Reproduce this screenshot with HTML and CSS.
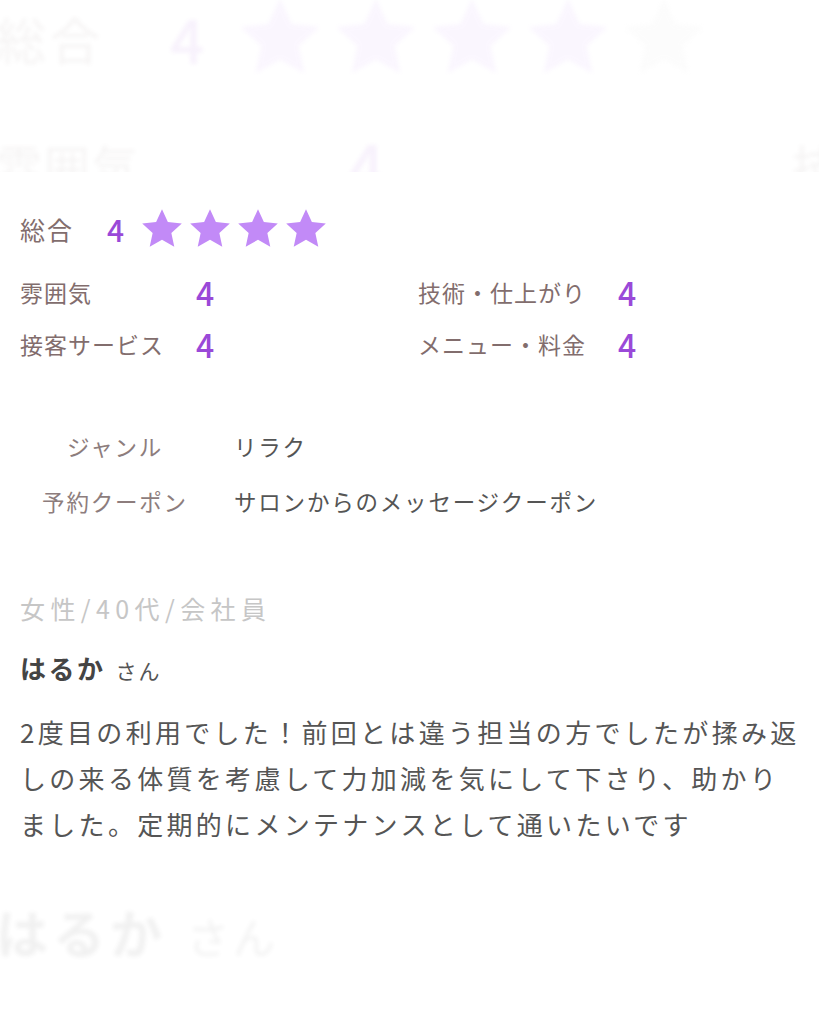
FILE: index.html
```html
<!DOCTYPE html>
<html lang="ja">
<head>
  <meta charset="UTF-8" />
  <meta name="viewport" content="width=device-width, initial-scale=1.0"/>
  <title>口コミ</title>
  <link rel="stylesheet" href="styles.css">
</head>
<body>

  <svg width="0" height="0" class="defs" aria-hidden="true">
    <symbol id="star" viewBox="0 0 24 24">
      <path d="M12 1.2l3.2 7 7.6.8-5.7 5.2 1.6 7.5L12 17.9l-6.7 3.8 1.6-7.5L1.2 9l7.6-.8z"/>
    </symbol>
  </svg>

  <div class="page">

    <main class="sheet">
      <section class="rating">
        <div class="rating-total">
          <span class="total-label">総合</span>
          <span class="total-num">4</span>
          <span class="stars">
            <svg class="star on"><use href="#star"/></svg>
            <svg class="star on"><use href="#star"/></svg>
            <svg class="star on"><use href="#star"/></svg>
            <svg class="star on"><use href="#star"/></svg>
            <svg class="star off"><use href="#star"/></svg>
          </span>
        </div>
        <div class="rating-grid">
          <span class="rating-label">雰囲気</span><span class="rating-num">4</span>
          <span class="rating-label">技術・仕上がり</span><span class="rating-num">4</span>
          <span class="rating-label">接客サービス</span><span class="rating-num">4</span>
          <span class="rating-label">メニュー・料金</span><span class="rating-num">4</span>
        </div>
      </section>

      <dl class="info">
        <dt>ジャンル</dt><dd>リラク</dd>
        <dt>予約クーポン</dt><dd>サロンからのメッセージクーポン</dd>
      </dl>

      <section class="review">
        <p class="reviewer-attr">女性/40代/会社員</p>
        <p class="reviewer-name"><b>はるか</b><span>さん</span></p>
        <p class="review-body">2度目の利用でした！前回とは違う担当の方でしたが揉み返しの来る体質を考慮して力加減を気にして下さり、助かりました。定期的にメンテナンスとして通いたいです</p>
      </section>
    </main>

    <!-- faint magnified echo at the top -->
    <div class="ghost ghost-top" aria-hidden="true">
      <div class="ghost-inner">
        <div class="sheet">
          <section class="rating">
            <div class="rating-total">
              <span class="total-label">総合</span>
              <span class="total-num">4</span>
              <span class="stars">
                <svg class="star on"><use href="#star"/></svg>
                <svg class="star on"><use href="#star"/></svg>
                <svg class="star on"><use href="#star"/></svg>
                <svg class="star on"><use href="#star"/></svg>
                <svg class="star dim"><use href="#star"/></svg>
              </span>
            </div>
            <div class="rating-grid">
              <span class="rating-label">雰囲気</span><span class="rating-num">4</span>
              <span class="rating-label">技術・仕上がり</span><span class="rating-num">4</span>
              <span class="rating-label">接客サービス</span><span class="rating-num">4</span>
              <span class="rating-label">メニュー・料金</span><span class="rating-num">4</span>
            </div>
          </section>
        </div>
      </div>
    </div>

    <!-- faint magnified echo at the bottom -->
    <div class="ghost ghost-bottom" aria-hidden="true">
      <div class="ghost-inner">
        <div class="sheet">
          <section class="rating">
            <div class="rating-total">
              <span class="total-label">総合</span>
              <span class="total-num">4</span>
            </div>
            <div class="rating-grid">
              <span class="rating-label">雰囲気</span><span class="rating-num">4</span>
              <span class="rating-label">技術・仕上がり</span><span class="rating-num">4</span>
              <span class="rating-label">接客サービス</span><span class="rating-num">4</span>
              <span class="rating-label">メニュー・料金</span><span class="rating-num">4</span>
            </div>
          </section>
          <dl class="info">
            <dt>ジャンル</dt><dd>リラク</dd>
            <dt>予約クーポン</dt><dd>サロンからのメッセージクーポン</dd>
          </dl>
          <section class="review">
            <p class="reviewer-attr">女性/40代/会社員</p>
            <p class="reviewer-name"><b>はるか</b><span>さん</span></p>
            <p class="review-body">2度目の利用でした！前回とは違う担当の方でしたが揉み返しの来る体質を考慮して力加減を気にして下さり、助かりました。定期的にメンテナンスとして通いたいです</p>
          </section>
        </div>
      </div>
    </div>

  </div>

</body>
</html>
```

FILE: styles.css
```css
body {
  font-family: 'Noto Sans CJK JP', 'Noto Sans', sans-serif;
  margin: 0;
  padding: 0;
  background-color: #ffffff;
  color: #555;
}

.defs {
  position: absolute;
}

.page {
  position: relative;
  width: 819px;
  height: 1024px;
  overflow: hidden;
}

.sheet {
  padding: 209px 12px 0 20px;
}

/* ---- ratings ---- */

.rating-total {
  display: flex;
  align-items: center;
  height: 40px;
}

.total-label {
  width: 87px;
  font-size: 25px;
  letter-spacing: 2px;
  color: #826d6d;
}

.total-num {
  width: 33px;
  font-size: 30px;
  font-weight: 500;
  color: #9a49d8;
}

.stars {
  display: flex;
  gap: 4px;
}

.star {
  width: 44px;
  height: 44px;
}

.star.on {
  fill: #c28af7;
}

.star.off {
  fill: #ffffff;
}

.star.dim {
  fill: #d8d8d8;
}

.rating-grid {
  display: grid;
  grid-template-columns: 176px 222px 200px auto;
  grid-auto-rows: 52px;
  align-items: center;
  margin-top: 17px;
}

.rating-label {
  font-size: 23px;
  letter-spacing: 1px;
  color: #826d6d;
}

.rating-num {
  font-size: 32px;
  font-weight: 500;
  color: #9a49d8;
}

/* ---- info ---- */

.info {
  display: grid;
  grid-template-columns: 190px auto;
  grid-auto-rows: 55px;
  column-gap: 24px;
  align-items: center;
  margin: 48px 0 0;
  font-size: 22.5px;
  letter-spacing: 1.8px;
}

.info dt {
  text-align: center;
  color: #8d7d7d;
}

.info dd {
  margin: 0;
  color: #555;
}

/* ---- review ---- */

.review p {
  margin: 0;
}

.reviewer-attr {
  margin-top: 60px !important;
  line-height: 40px;
  font-size: 25px;
  letter-spacing: 5.4px;
  color: #c6c6c6;
}

.reviewer-name {
  margin-top: 20px !important;
  line-height: 40px;
  color: #444;
}

.reviewer-name b {
  font-size: 26px;
  letter-spacing: 2.5px;
  font-weight: bold;
}

.reviewer-name span {
  margin-left: 10px;
  font-size: 21px;
  letter-spacing: 2px;
  color: #555;
}

.review-body {
  margin-top: 17px !important;
  font-size: 26px;
  line-height: 46px;
  letter-spacing: 3.3px;
  color: #555;
}

/* ---- faint zoomed echoes ---- */

.ghost {
  position: absolute;
  left: 0;
  width: 819px;
  overflow: hidden;
  pointer-events: none;
}

.ghost-inner {
  position: absolute;
  left: 0;
  width: 819px;
  transform: scale(2);
  opacity: 0.07;
  filter: blur(1px);
}

.ghost-top {
  top: 0;
  height: 172px;
}

.ghost-top .ghost-inner {
  top: 0;
  transform-origin: 44px 420px;
}

.ghost-bottom {
  top: 870px;
  height: 154px;
}

.ghost-bottom .ghost-inner {
  top: -870px;
  transform-origin: 44px 404px;
}
```
